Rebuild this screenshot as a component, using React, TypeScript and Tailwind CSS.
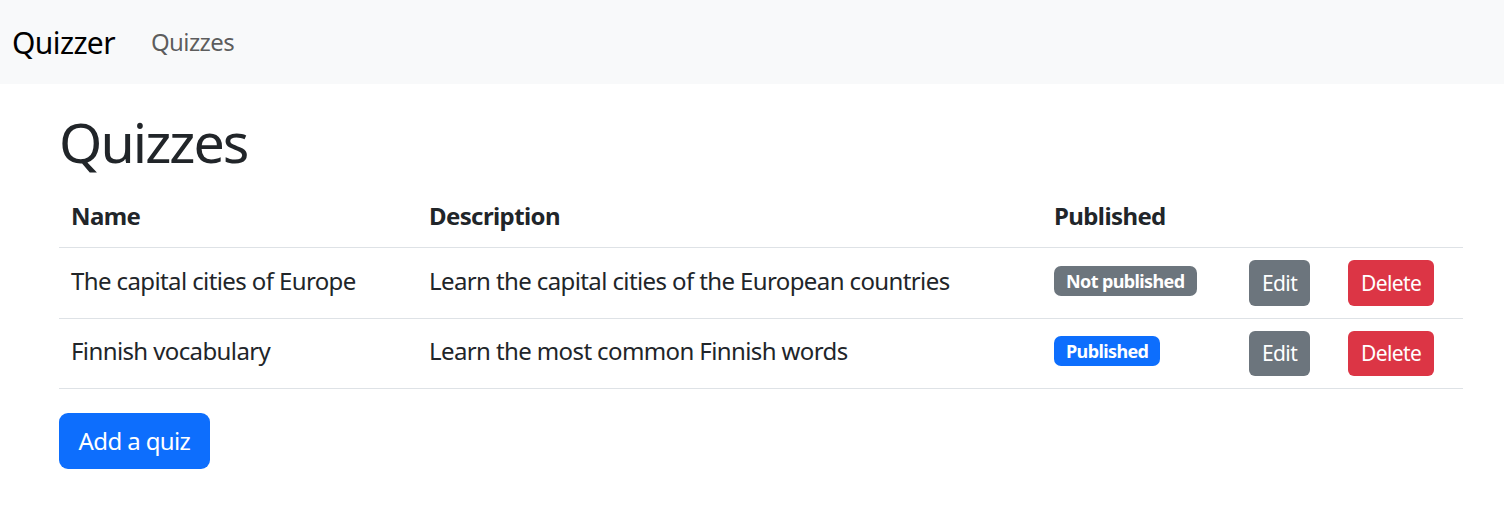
export default function App() {
  const quizzes = [
    {
      name: "The capital cities of Europe",
      description: "Learn the capital cities of the European countries",
      published: false,
    },
    {
      name: "Finnish vocabulary",
      description: "Learn the most common Finnish words",
      published: true,
    },
  ];

  return (
    <div className="min-h-screen bg-white text-[#212529] font-['Noto_Sans',sans-serif] tracking-[-0.038em]">
      {/* Navbar */}
      <nav className="h-[84px] bg-[#f8f9fa] flex items-center pl-[12px]">
        <span className="text-[30px] text-black mr-[24px]">Quizzer</span>
        <a className="text-[24px] text-black/65 px-[12px]">Quizzes</a>
      </nav>

      <div className="pl-[59px] w-[1463px] pt-[24px]">
        <h1 className="text-[55.5px] leading-[67px] font-normal mb-[12px] tracking-[-0.035em]">Quizzes</h1>

        <table className="w-full border-collapse text-[24px] leading-[36px] mb-[24px]">
          <thead>
            <tr className="border-b border-[#dee2e6] text-left align-bottom">
              <th className="w-[358px] px-[12px] pt-[11px] pb-[13px] font-bold">Name</th>
              <th className="w-[625px] px-[12px] pt-[11px] pb-[13px] font-bold">Description</th>
              <th className="w-[195px] px-[12px] pt-[11px] pb-[13px] font-bold">Published</th>
              <th className="w-[99px] p-[12px]"></th>
              <th className="p-[12px]"></th>
            </tr>
          </thead>
          <tbody>
            {quizzes.map((q) => (
              <tr key={q.name} className="border-b border-[#dee2e6] align-middle">
                <td className="px-[12px] pt-[10px] pb-[14px]">{q.name}</td>
                <td className="px-[12px] pt-[10px] pb-[14px]">{q.description}</td>
                <td className="px-[12px] pt-[12px] pb-[16px]">
                  <div
                    className={`w-fit text-[18px] leading-[18px] font-bold text-white rounded-[7px] px-[12px] py-[6px] ${
                      q.published ? "bg-[#0d6efd]" : "bg-[#6c757d]"
                    }`}
                  >
                    {q.published ? "Published" : "Not published"}
                  </div>
                </td>
                <td className="p-[12px]">
                  <button className="h-[45.5px] px-[13px] text-[21px] text-white bg-[#6c757d] rounded-[6px]">
                    Edit
                  </button>
                </td>
                <td className="p-[12px]">
                  <button className="h-[45.5px] px-[13px] text-[21px] text-white bg-[#dc3545] rounded-[6px]">
                    Delete
                  </button>
                </td>
              </tr>
            ))}
          </tbody>
        </table>

        <button className="h-[56px] px-[19.5px] text-[24px] text-white bg-[#0d6efd] rounded-[9px]">
          Add a quiz
        </button>
      </div>
    </div>
  );
}
